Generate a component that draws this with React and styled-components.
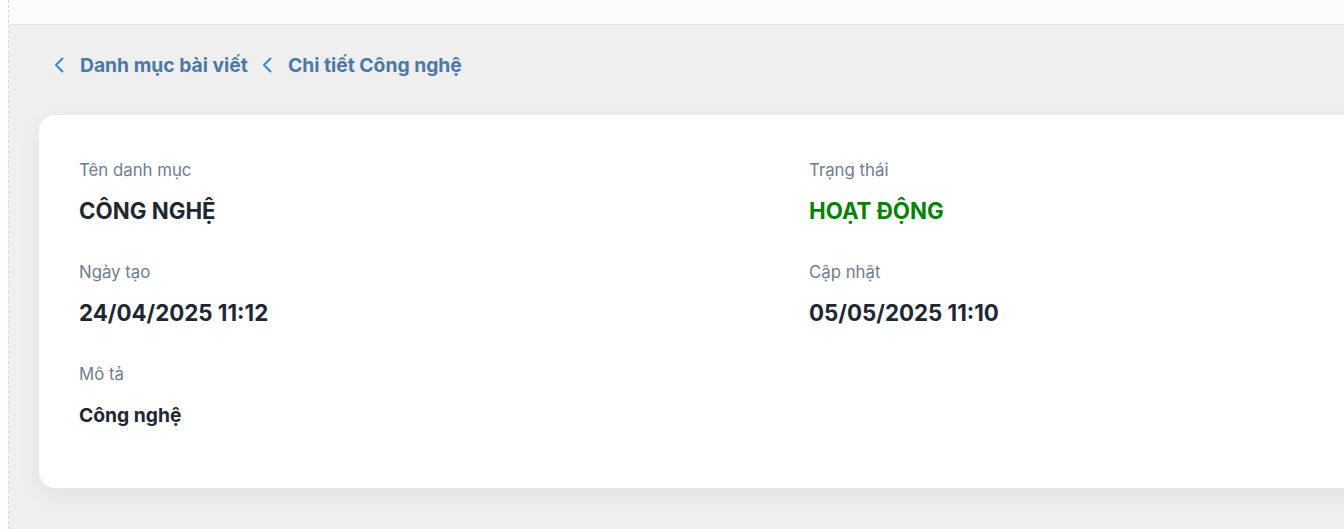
import React from 'react';
import styled, { createGlobalStyle } from 'styled-components';

const GlobalStyle = createGlobalStyle`
  html, body {
    margin: 0;
    padding: 0;
    height: 100%;
    overflow: hidden;
    background: #efefef;
    font-family: Inter, "Noto Sans", "Liberation Sans", sans-serif;
  }
`;

const Shell = styled.div`
  display: flex;
  height: 529px;
  width: 1344px;
  overflow: hidden;
`;

const Rail = styled.div`
  width: 8px;
  flex: none;
  background: #fdfdfd;
  border-right: 1px dashed #d6d6d6;
`;

const Main = styled.div`
  flex: 1;
  display: flex;
  flex-direction: column;
  min-width: 0;
`;

const TopBar = styled.div`
  height: 24px;
  flex: none;
  background: #fcfcfc;
  border-bottom: 1px solid #e4e4e4;
`;

const Content = styled.div`
  padding: 24px 0 0 30px;
`;

const Breadcrumb = styled.nav`
  display: flex;
  align-items: center;
  height: 32px;
  padding-left: 14px;
  margin-bottom: 34px;
`;

const Crumb = styled.a`
  display: flex;
  align-items: center;
  gap: 15px;
  margin-right: 13px;
  font-size: 19.3px;
  font-weight: 700;
  color: #4a79a8;
  text-decoration: none;
`;

const Chevron = () => (
  <svg width="12" height="16" viewBox="0 0 12 16" fill="none" stroke="#2a8be8" strokeWidth="2" strokeLinecap="round" strokeLinejoin="round">
    <path d="M9.5 1.5L3 8l6.5 6.5" />
  </svg>
);

const Card = styled.section`
  width: 1540px;
  background: #fff;
  border-radius: 16px;
  box-shadow: 0 8px 24px rgba(0, 0, 0, 0.06);
  padding: 44px 40px 59px;
  box-sizing: border-box;
`;

const Grid = styled.div`
  display: grid;
  grid-template-columns: 730px 730px;
  row-gap: 36px;
`;

const Field = styled.div`
  display: flex;
  flex-direction: column;
  gap: 16px;
`;

const Label = styled.div`
  font-size: 16.8px;
  line-height: 22px;
  color: #6e7d8e;
`;

const Value = styled.div`
  font-size: ${p => (p.$small ? '19.3px' : '22.3px')};
  line-height: 28px;
  font-weight: 700;
  color: ${p => p.$color || '#1f2733'};
`;

const fields = [
  { label: 'Tên danh mục', value: 'CÔNG NGHỆ' },
  { label: 'Trạng thái', value: 'HOẠT ĐỘNG', color: '#048204' },
  { label: 'Ngày tạo', value: '24/04/2025 11:12' },
  { label: 'Cập nhật', value: '05/05/2025 11:10' },
  { label: 'Mô tả', value: 'Công nghệ', small: true },
];

export default function App() {
  return (
    <Shell>
      <GlobalStyle />
      <Rail />
      <Main>
        <TopBar />
        <Content>
          <Breadcrumb>
            <Crumb href="#">
              <Chevron />
              Danh mục bài viết
            </Crumb>
            <Crumb href="#">
              <Chevron />
              Chi tiết Công nghệ
            </Crumb>
          </Breadcrumb>
          <Card>
            <Grid>
              {fields.map(f => (
                <Field key={f.label}>
                  <Label>{f.label}</Label>
                  <Value $color={f.color} $small={f.small}>{f.value}</Value>
                </Field>
              ))}
            </Grid>
          </Card>
        </Content>
      </Main>
    </Shell>
  );
}
